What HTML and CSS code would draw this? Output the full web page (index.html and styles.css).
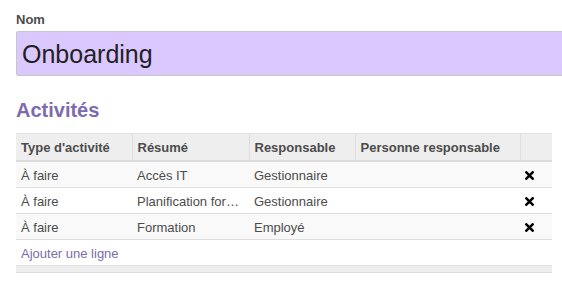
FILE: index.html
```html
<!DOCTYPE html>
<html lang="fr">
<head>
  <meta charset="UTF-8">
  <title>Onboarding</title>
  <link rel="stylesheet" href="styles.css">
</head>
<body>
  <div class="sheet">
    <label class="field-label" for="name">Nom</label>
    <div class="name-input" id="name">Onboarding</div>

    <h2 class="section-title">Activités</h2>

    <table class="lines">
      <colgroup>
        <col class="c-type">
        <col class="c-sum">
        <col class="c-resp">
        <col class="c-person">
        <col class="c-del">
      </colgroup>
      <thead>
        <tr>
          <th>Type d'activité</th>
          <th>Résumé</th>
          <th>Responsable</th>
          <th>Personne responsable</th>
          <th></th>
        </tr>
      </thead>
      <tbody>
        <tr>
          <td>À faire</td>
          <td>Accès IT</td>
          <td>Gestionnaire</td>
          <td></td>
          <td class="del-cell"><svg class="del" viewBox="0 0 10 10"><path d="M1.5 1.5 L8.5 8.5 M8.5 1.5 L1.5 8.5"/></svg></td>
        </tr>
        <tr>
          <td>À faire</td>
          <td><span class="clip">Planification formation</span></td>
          <td>Gestionnaire</td>
          <td></td>
          <td class="del-cell"><svg class="del" viewBox="0 0 10 10"><path d="M1.5 1.5 L8.5 8.5 M8.5 1.5 L1.5 8.5"/></svg></td>
        </tr>
        <tr>
          <td>À faire</td>
          <td>Formation</td>
          <td>Employé</td>
          <td></td>
          <td class="del-cell"><svg class="del" viewBox="0 0 10 10"><path d="M1.5 1.5 L8.5 8.5 M8.5 1.5 L1.5 8.5"/></svg></td>
        </tr>
        <tr class="add-row">
          <td colspan="5"><a href="#">Ajouter une ligne</a></td>
        </tr>
      </tbody>
      <tfoot>
        <tr><td colspan="5"></td></tr>
      </tfoot>
    </table>
  </div>
</body>
</html>
```

FILE: styles.css
```css
body {
  margin: 0;
  font-family: 'Liberation Sans', Arial, sans-serif;
  font-size: 13px;
  color: #4c4c4c;
  background: #fff;
}
.sheet {
  padding: 12px 0 0 16px;
}
.field-label {
  display: block;
  font-weight: bold;
  font-size: 13px;
  line-height: 16px;
  margin-bottom: 3px;
}
.name-input {
  box-sizing: border-box;
  height: 45px;
  margin-right: -10px;
  padding: 4px 5px 0;
  background: #dac8ff;
  border: 1px solid #c8c8c8;
  border-radius: 2px;
  font-size: 25px;
  line-height: 36px;
  color: #222;
}
.section-title {
  margin: 23px 0 12px;
  font-size: 20px;
  line-height: 22px;
  font-weight: bold;
  color: #7c6bad;
}
.lines {
  width: 536px;
  border-collapse: collapse;
  table-layout: fixed;
}
.c-type { width: 116px; }
.c-sum { width: 117px; }
.c-resp { width: 106px; }
.c-person { width: 165px; }
.c-del { width: 32px; }
.lines th {
  height: 26px;
  padding: 0 5px;
  background: #eee;
  border-top: 1px solid #e2e2e2;
  border-left: 1px solid #ddd;
  border-bottom: 2px solid #dcdcdc;
  text-align: left;
  font-weight: bold;
  white-space: nowrap;
  overflow: hidden;
}
.lines th:first-child {
  border-left: none;
}
.lines td {
  height: 24px;
  padding: 1px 5px 0;
  border-bottom: 1px solid #ddd;
  white-space: nowrap;
  overflow: hidden;
}
.lines tbody tr:nth-child(odd) td {
  background: #f9f9f9;
}
.lines tbody tr.add-row td {
  background: #fff;
  border-bottom: none;
}
.clip {
  display: block;
  overflow: hidden;
  text-overflow: ellipsis;
}
.del {
  display: block;
  width: 9px;
  height: 9px;
  margin: 1px 0 0 0;
  stroke: #000;
  stroke-width: 2.8;
  stroke-linecap: square;
}
.add-row a {
  color: #7c6bad;
  text-decoration: none;
}
.lines tfoot td {
  height: 6px;
  padding: 0;
  background: #eee;
  border-top: 1px solid #e2e2e2;
}
```
